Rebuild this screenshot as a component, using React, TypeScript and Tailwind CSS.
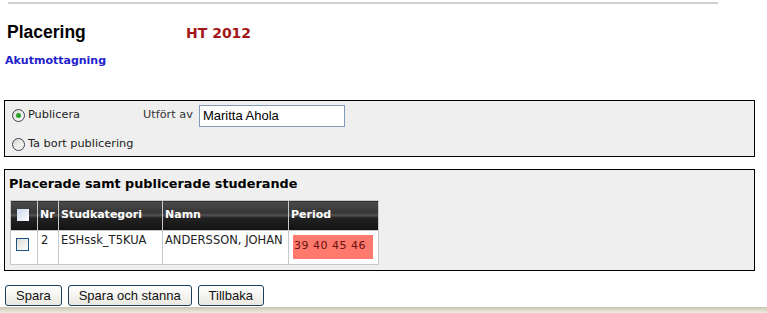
import { useState } from 'react'

const verdana = { fontFamily: '"DejaVu Sans", Verdana, sans-serif' }

function Radio({ checked }: { checked: boolean }) {
  return (
    <span className="relative inline-block w-[13px] h-[13px] shrink-0 rounded-full border border-[#3a4450] bg-gradient-to-br from-[#d8d8d2] to-white">
      {checked && (
        <span className="absolute left-[3px] top-[3px] w-[5px] h-[5px] rounded-full bg-[#2ba12b]" />
      )}
    </span>
  )
}

function Check() {
  return (
    <span className="inline-block w-[13px] h-[13px] border border-[#1c5180] bg-gradient-to-br from-[#dcdcd6] to-white" />
  )
}

const cols = [
  { label: '', w: 'w-[27px]' },
  { label: 'Nr', w: 'w-[21px]' },
  { label: 'Studkategori', w: 'w-[104px]' },
  { label: 'Namn', w: 'w-[126px]' },
  { label: 'Period', w: 'w-[90px]' },
]

export default function App() {
  const [publish, setPublish] = useState(true)

  return (
    <div className="w-[767px] h-[313px] bg-white overflow-hidden relative" style={{ fontFamily: '"Liberation Sans", Arial, sans-serif' }}>
      <div className="ml-[8px] mt-[2px] w-[710px] h-[2px] bg-[#cfcfcf]" />

      <div className="flex items-baseline pl-[7px] pt-[15px] h-[41px]">
        <span className="w-[179px] text-[17.5px] font-bold text-black">Placering</span>
        <span className="text-[14px] font-bold text-[#a31818]" style={verdana}>HT 2012</span>
      </div>

      <div className="pl-[5px] pt-[9px] text-[11px] font-bold text-[#2222cc] leading-[14px]" style={verdana}>
        Akutmottagning
      </div>

      <div className="mx-[4px] mt-[32px] h-[57px] w-[751px] border border-black bg-[#efefef] text-[11.3px] text-[#222]" style={verdana}>
        <div className="flex items-center pl-[7px] pt-[3px] h-[26px]">
          <label className="flex items-center gap-[3px] w-[131px] cursor-pointer" onClick={() => setPublish(true)}>
            <Radio checked={publish} />
            <span>Publicera</span>
          </label>
          <span className="text-[#333]">Utfört av</span>
          <input
            className="ml-[6px] w-[146px] h-[22px] border border-[#7f9db9] bg-white px-[3px] text-[13px] text-black outline-none"
            style={{ fontFamily: '"Liberation Sans", Arial, sans-serif' }}
            defaultValue="Maritta Ahola"
          />
        </div>
        <label className="flex items-center gap-[3px] pl-[7px] pt-[9px] cursor-pointer" onClick={() => setPublish(false)}>
          <Radio checked={!publish} />
          <span>Ta bort publicering</span>
        </label>
      </div>

      <div className="mx-[4px] mt-[12px] h-[102px] w-[751px] border border-black bg-[#efefef]" style={verdana}>
        <div className="pl-[4px] pt-[6px] text-[12.8px] font-bold text-black leading-[16px]">
          Placerade samt publicerade studerande
        </div>
        <table className="ml-[5px] mt-[8px] border-collapse border border-[#c8c8c8] bg-white text-[11.5px]">
          <thead>
            <tr className="h-[30px]">
              {cols.map((c, i) => (
                <th
                  key={i}
                  className={`${c.w} border border-[#c8c8c8] bg-[linear-gradient(#4a4a4a_0%,#363636_40%,#585858_48%,#222_56%,#121212_100%)] px-[2px] text-left text-[11px] font-bold text-white`}
                >
                  {i === 0 ? <span className="ml-[4px] inline-block w-[12px] h-[12px] align-middle bg-gradient-to-br from-[#c9d8ea] to-white" /> : c.label}
                </th>
              ))}
            </tr>
          </thead>
          <tbody>
            <tr className="h-[34px] align-top text-[#222]">
              <td className="border border-[#c8c8c8] pl-[5px] pt-[7px] leading-none"><Check /></td>
              <td className="border border-[#c8c8c8] px-[3px] pt-[1px]">2</td>
              <td className="border border-[#c8c8c8] px-[2px] pt-[1px]">ESHssk_T5KUA</td>
              <td className="border border-[#c8c8c8] px-[2px] pt-[1px] whitespace-nowrap">ANDERSSON, JOHAN</td>
              <td className="border border-[#c8c8c8] px-[4px] pt-[4px]">
                <div className="w-[80px] h-[24px] bg-[#ff7a6c] pl-[1px] pt-[3px] text-[11px] text-[#6a1010] tracking-[0.5px]">39 40 45 46</div>
              </td>
            </tr>
          </tbody>
        </table>
      </div>

      <div className="flex gap-[6px] pl-[5px] mt-[14px] text-[13px]">
        {['Spara', 'Spara och stanna', 'Tillbaka'].map((b) => (
          <button
            key={b}
            className="h-[21px] rounded-[3px] border border-[#1c3f5e] bg-gradient-to-b from-white to-[#e9e8e0] px-[10px] text-[#111] leading-none"
          >
            {b}
          </button>
        ))}
      </div>

      <div className="absolute left-0 right-0 bottom-0 h-[6px] bg-gradient-to-b from-[#c8c4b0] to-[#f0eee4]" />
    </div>
  )
}
